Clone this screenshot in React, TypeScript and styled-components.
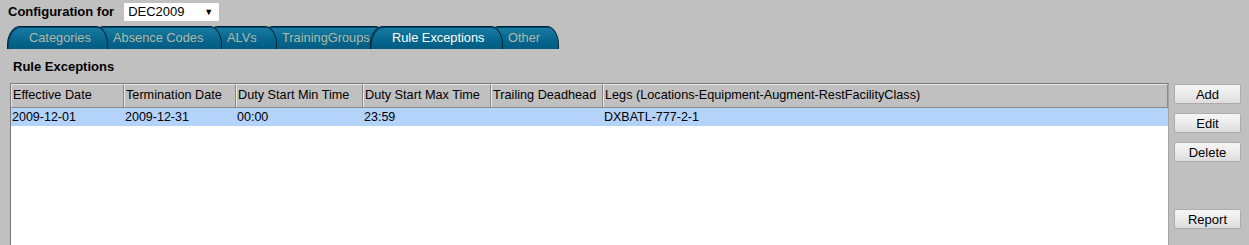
import React from "react";
import styled, { createGlobalStyle } from "styled-components";

const GlobalStyle = createGlobalStyle`
  html, body {
    margin: 0;
    padding: 0;
    background: #c0c0c0;
    font-family: "Liberation Sans", Arial, sans-serif;
    overflow: hidden;
  }
`;

const Page = styled.div`
  height: 245px;
  overflow: hidden;
  background: #c0c0c0;
`;

const TopBar = styled.div`
  display: flex;
  align-items: center;
  gap: 10px;
  height: 22px;
  padding-left: 8px;

  label {
    font-weight: bold;
    font-size: 13px;
    color: #000;
  }
`;

const SelectBox = styled.div`
  display: flex;
  align-items: center;
  justify-content: space-between;
  box-sizing: border-box;
  width: 95px;
  height: 18px;
  margin-top: 1px;
  padding: 0 6px 0 4px;
  background: #fff;
  font-size: 13px;
  color: #000;

  span:last-child {
    font-size: 9px;
  }
`;

const TabStrip = styled.div`
  display: flex;
  height: 23px;
  margin-top: 4px;
  padding-left: 7px;
`;

const Tab = styled.div<{ $width: number; $active?: boolean; $z: number }>`
  position: relative;
  z-index: ${({ $active, $z }) => ($active ? 20 : $z)};
  box-sizing: border-box;
  flex: none;
  width: ${({ $width }) => $width}px;
  height: 23px;
  padding-left: 21px;
  line-height: 22px;
  font-size: 12.8px;
  white-space: nowrap;
  color: ${({ $active }) => ($active ? "#ffffff" : "#b0baa6")};
  background: linear-gradient(to bottom, #1a7ca3 0%, #0a6b93 45%, #005b82 100%);
  border: 1.5px solid #002437;
  border-bottom: none;
  border-radius: 13px 12px 0 0 / 19px 19px 0 0;
  box-shadow: inset 1px 1px 0 #004a6a;

  &:not(:first-child) {
    margin-left: -17px;
  }
`;

const Title = styled.div`
  margin-top: 10px;
  padding-left: 13px;
  font-size: 13px;
  font-weight: bold;
  line-height: 15px;
  color: #000;
`;

const Content = styled.div`
  display: flex;
  gap: 5px;
  margin-top: 9px;
  padding-left: 10px;
`;

const ListBox = styled.div`
  box-sizing: border-box;
  width: 1159px;
  height: 200px;
  background: #fff;
  border-top: 1px solid #7a7a7a;
  border-left: 1px solid #7a7a7a;
  border-right: 1px solid #a4a4a4;
`;

const columns = "113px 112px 127px 128px 112px 1fr";

const HeaderRow = styled.div`
  display: grid;
  grid-template-columns: ${columns};
  background: #c0c0c0;
  border-bottom: 1px solid #8a8a8a;
`;

const HeaderCell = styled.div`
  box-sizing: border-box;
  height: 23px;
  padding-left: 1px;
  line-height: 20px;
  font-size: 12.7px;
  color: #000;
  white-space: nowrap;
  overflow: hidden;
  border-top: 1px solid #e6e6e6;
  border-left: 1px solid #e6e6e6;
  border-right: 1px solid #8a8a8a;
`;

const DataRow = styled.div<{ $selected?: boolean }>`
  display: grid;
  grid-template-columns: ${columns};
  height: 18px;
  background: ${({ $selected }) => ($selected ? "#b4d3fb" : "#fff")};
`;

const DataCell = styled.div`
  padding-left: 1px;
  line-height: 18px;
  font-size: 12.5px;
  color: #000;
  white-space: nowrap;
  overflow: hidden;
`;

const ButtonColumn = styled.div`
  display: flex;
  flex-direction: column;
  gap: 9px;
  padding-top: 1px;
`;

const Button = styled.button<{ $spaced?: boolean }>`
  box-sizing: border-box;
  width: 67px;
  height: 20px;
  margin-top: ${({ $spaced }) => ($spaced ? "38px" : "0")};
  padding: 0;
  font-family: "Liberation Sans", Arial, sans-serif;
  font-size: 13px;
  color: #000;
  background: linear-gradient(to bottom, #f6f6f6 0%, #ebebeb 50%, #dddddd 100%);
  border: 1px solid #acacac;
  border-radius: 2px;
`;

const tabs = [
  { label: "Categories", width: 101 },
  { label: "Absence Codes", width: 131 },
  { label: "ALVs", width: 72 },
  { label: "TrainingGroups", width: 127 },
  { label: "Rule Exceptions", width: 133, active: true },
  { label: "Other", width: 73 },
];

const headers = [
  "Effective Date",
  "Termination Date",
  "Duty Start Min Time",
  "Duty Start Max Time",
  "Trailing Deadhead",
  "Legs (Locations-Equipment-Augment-RestFacilityClass)",
];

const row = ["2009-12-01", "2009-12-31", "00:00", "23:59", "", "DXBATL-777-2-1"];

const App: React.FC = () => {
  return (
    <Page>
      <GlobalStyle />
      <TopBar>
        <label>Configuration for</label>
        <SelectBox>
          <span>DEC2009</span>
          <span>▼</span>
        </SelectBox>
      </TopBar>

      <TabStrip>
        {tabs.map((t, i) => (
          <Tab key={t.label} $width={t.width} $active={t.active} $z={tabs.length - i}>
            {t.label}
          </Tab>
        ))}
      </TabStrip>

      <Title>Rule Exceptions</Title>

      <Content>
        <ListBox>
          <HeaderRow>
            {headers.map((h) => (
              <HeaderCell key={h}>{h}</HeaderCell>
            ))}
          </HeaderRow>
          <DataRow $selected>
            {row.map((c, i) => (
              <DataCell key={i}>{c}</DataCell>
            ))}
          </DataRow>
        </ListBox>

        <ButtonColumn>
          <Button>Add</Button>
          <Button>Edit</Button>
          <Button>Delete</Button>
          <Button $spaced>Report</Button>
        </ButtonColumn>
      </Content>
    </Page>
  );
};

export default App;
